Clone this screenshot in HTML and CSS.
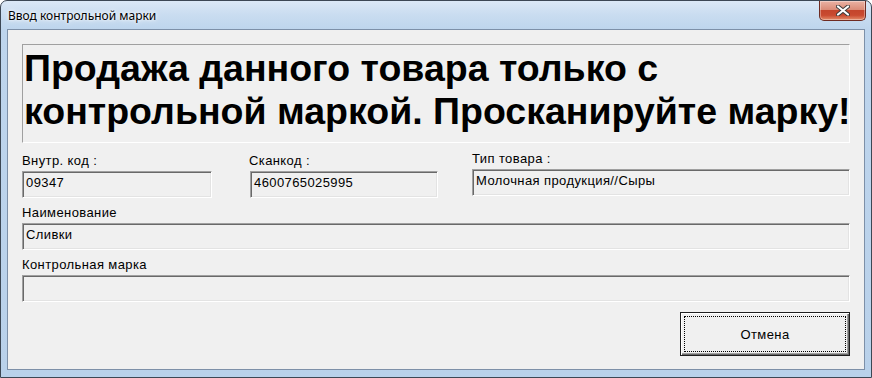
FILE: index.html
```html
<!DOCTYPE html>
<html lang="ru">
<head>
    <meta charset="UTF-8">
    <title>Ввод контрольной марки</title>
    <link rel="stylesheet" href="styles.css">
</head>
<body>
    <div class="window">
        <div class="titlebar">
            <span class="title">Ввод контрольной марки</span>
            <button class="close" title="Закрыть">
                <svg width="14" height="11" viewBox="0 0 14 11">
                    <path d="M2 1.5 L12 9.5 M12 1.5 L2 9.5" stroke="#3b3b3b" stroke-width="4" stroke-linecap="round"/>
                    <path d="M2 1.5 L12 9.5 M12 1.5 L2 9.5" stroke="#ffffff" stroke-width="2.2" stroke-linecap="round"/>
                </svg>
            </button>
        </div>
        <div class="client">
            <div class="banner">Продажа данного товара только с<br>контрольной маркой. Просканируйте марку!</div>

            <div class="row">
                <div class="field code">
                    <label>Внутр. код :</label>
                    <div class="box">09347</div>
                </div>
                <div class="field scan">
                    <label>Сканкод :</label>
                    <div class="box">4600765025995</div>
                </div>
                <div class="field type">
                    <label>Тип товара :</label>
                    <div class="box">Молочная продукция//Сыры</div>
                </div>
            </div>

            <div class="field wide">
                <label>Наименование</label>
                <div class="box">Сливки</div>
            </div>
            <div class="field wide">
                <label>Контрольная марка</label>
                <div class="box"></div>
            </div>

            <div class="actions">
                <button class="btn"><span>Отмена</span></button>
            </div>
        </div>
    </div>
</body>
</html>
```
FILE: styles.css
```css
body {
    margin: 0;
    background: #fff;
    font-family: 'Liberation Sans', Arial, sans-serif;
}
.window {
    width: 872px;
    height: 378px;
    box-sizing: border-box;
    border: 1px solid #3c4754;
    border-radius: 7px 7px 0 0;
    padding: 0 6px 7px 6px;
    display: flex;
    flex-direction: column;
    background: linear-gradient(180deg, #dbe8f6 0, #c9dcf0 14px, #bed5ed 28px, #b9d1ea 100%);
}
.titlebar {
    height: 28px;
    display: flex;
    align-items: flex-start;
}
.title {
    font-family: 'Noto Sans', 'Liberation Sans', sans-serif;
    font-size: 12px;
    color: #000;
    margin: 6px 0 0 1px;
    text-shadow: 0 0 6px #fff, 0 0 3px #fff;
}
.close {
    margin-left: auto;
    margin-right: -1px;
    width: 47px;
    height: 20px;
    padding: 0;
    border: 1px solid #6e2b22;
    border-top: none;
    border-radius: 0 0 5px 5px;
    background: linear-gradient(180deg, #eab2a4 0, #db8c78 45%, #c4452c 50%, #c94a30 75%, #e48c6a 100%);
    box-shadow: inset 0 0 0 1px rgba(255, 255, 255, 0.35);
    display: flex;
    align-items: center;
    justify-content: center;
}
.client {
    flex: 1;
    background: #f0f0f0;
    border: 1px solid #7d90a8;
    padding: 14px 14px 0 14px;
    font-size: 13px;
    letter-spacing: 0.4px;
    color: #000;
}
.banner {
    height: 99px;
    box-sizing: border-box;
    border: 1px solid;
    border-color: #a0a0a0 #fff #fff #a0a0a0;
    padding: 2px 0 0 1px;
    font-size: 37.5px;
    font-weight: bold;
    line-height: 43px;
    letter-spacing: 0;
    white-space: nowrap;
}
.row {
    display: flex;
    margin-top: 11px;
}
.field label {
    display: block;
    line-height: 14px;
    margin-bottom: 3px;
}
.box {
    height: 27px;
    box-sizing: border-box;
    border: 1px solid;
    border-color: #a0a0a0 #fff #fff #a0a0a0;
    box-shadow: inset 1px 1px 0 #696969, inset -1px -1px 0 #e3e3e3;
    padding: 4px 3px 0 3px;
    line-height: 14px;
    white-space: nowrap;
}
.code {
    width: 190px;
}
.scan {
    width: 188px;
    margin-left: 38px;
}
.scan label {
    margin-left: -1px;
}
.type {
    flex: 1;
    margin-left: 34px;
    margin-top: -2px;
}
.wide {
    margin-top: 8px;
}
.actions {
    display: flex;
    justify-content: flex-end;
    margin-top: 10px;
}
.btn {
    width: 170px;
    height: 44px;
    padding: 3px;
    background: #f0f0f0;
    border: 1px solid #1e1e1e;
    box-shadow: inset 1px 1px 0 #fff, inset -1px -1px 0 #696969, inset -2px -2px 0 #a0a0a0;
    font-family: 'Liberation Sans', Arial, sans-serif;
    font-size: 13px;
    letter-spacing: 0.4px;
    color: #000;
    display: flex;
}
.btn span {
    flex: 1;
    border: 1px dotted #000;
    display: flex;
    align-items: center;
    justify-content: center;
}
```
